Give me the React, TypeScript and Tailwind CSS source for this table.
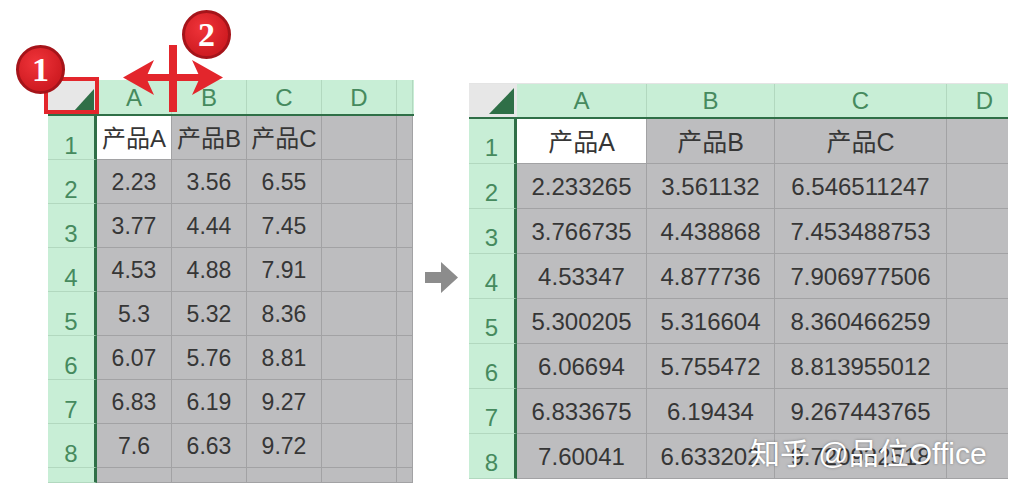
import React from 'react';

const FONT = "font-['Liberation_Sans','Noto_Sans_CJK_SC',sans-serif]";

const leftCols = ['w-[75px]', 'w-[75px]', 'w-[75px]', 'w-[75px]', 'w-[16px]'];
const rightCols = ['w-[130px]', 'w-[128px]', 'w-[172px]', 'w-[76px]'];
const letters = ['A', 'B', 'C', 'D', ''];

const leftData = [
  ['产品A', '产品B', '产品C'],
  ['2.23', '3.56', '6.55'],
  ['3.77', '4.44', '7.45'],
  ['4.53', '4.88', '7.91'],
  ['5.3', '5.32', '8.36'],
  ['6.07', '5.76', '8.81'],
  ['6.83', '6.19', '9.27'],
  ['7.6', '6.63', '9.72'],
];

const rightData = [
  ['产品A', '产品B', '产品C'],
  ['2.233265', '3.561132', '6.546511247'],
  ['3.766735', '4.438868', '7.453488753'],
  ['4.53347', '4.877736', '7.906977506'],
  ['5.300205', '5.316604', '8.360466259'],
  ['6.06694', '5.755472', '8.813955012'],
  ['6.833675', '6.19434', '9.267443765'],
  ['7.60041', '6.633202', '9.720932518'],
];

function LeftSheet() {
  return (
    <div className="ml-[48px] mt-[80px] w-[366px] h-[403px] overflow-hidden">
      {/* column headers */}
      <div className="flex h-[36px] bg-[#c8eed6] border-b-2 border-[#2f6f47]">
        <div className="w-[49px] h-full bg-[#e7e7e7] flex items-end justify-end p-[3px]">
          <div className="w-[20px] h-[22px] bg-[#2f6f47] [clip-path:polygon(100%_0,100%_100%,0_100%)]" />
        </div>
        {leftCols.map((w, i) => (
          <div
            key={i}
            className={`${w} h-full shrink-0 border-r border-[#b2d8bf] flex items-end justify-center pb-[1px] text-[24px] leading-none text-[#468a5e]`}
          >
            <span className="pb-[3px]">{letters[i]}</span>
          </div>
        ))}
      </div>
      {/* rows */}
      {[...leftData, null].map((row, r) => (
        <div key={r} className={`flex ${row ? 'h-[44px]' : 'h-[15px]'}`}>
          <div className="w-[49px] shrink-0 bg-[#c8eed6] border-r-[3px] border-[#2f6f47] border-b border-b-[#b2d8bf] flex items-end justify-center pb-[1px] text-[24px] leading-none text-[#468a5e]">
            {row ? r + 1 : ''}
          </div>
          {leftCols.map((w, c) => (
            <div
              key={c}
              className={`${w} shrink-0 border-r border-b border-[#a2a2a4] flex items-center justify-center pt-[2px] leading-none text-[#363636] ${
                r === 0 ? 'text-[24px]' : 'text-[23px]'
              } ${r === 0 && c === 0 ? 'bg-white' : 'bg-[#bdbdbf]'}`}
            >
              {row && c < 3 ? row[c] : ''}
            </div>
          ))}
        </div>
      ))}
    </div>
  );
}

function RightSheet() {
  return (
    <div className="ml-[11px] mt-[83px] w-[539px] h-[396px] overflow-hidden border-t border-[#e4e4e4]">
      <div className="flex h-[35px] bg-[#c8eed6] border-b-2 border-[#2f6f47]">
        <div className="w-[48px] h-full shrink-0 bg-[#e7e7e7] flex items-end justify-end p-[3px]">
          <div className="w-[25px] h-[26px] bg-[#2f6f47] [clip-path:polygon(100%_0,100%_100%,0_100%)]" />
        </div>
        {rightCols.map((w, i) => (
          <div
            key={i}
            className={`${w} h-full shrink-0 border-r border-[#b2d8bf] flex items-end justify-center text-[24px] leading-none text-[#468a5e]`}
          >
            <span className="pb-[4px]">{letters[i]}</span>
          </div>
        ))}
      </div>
      {rightData.map((row, r) => (
        <div key={r} className="flex h-[45px]">
          <div className="w-[48px] shrink-0 bg-[#c8eed6] border-r-[3px] border-[#2f6f47] border-b border-b-[#b2d8bf] flex items-end justify-center pb-[3px] text-[24px] leading-none text-[#468a5e]">
            {r + 1}
          </div>
          {rightCols.map((w, c) => (
            <div
              key={c}
              className={`${w} shrink-0 border-r border-b border-[#a2a2a4] flex items-center justify-center pt-[2px] leading-none text-[#363636] ${
                r === 0 ? 'text-[25px]' : 'text-[24px]'
              } ${r === 0 && c === 0 ? 'bg-white' : 'bg-[#bdbdbf]'}`}
            >
              {c < 3 ? row[c] : ''}
            </div>
          ))}
        </div>
      ))}
    </div>
  );
}

function Badge({ n, className }: { n: string; className: string }) {
  return (
    <div
      className={`absolute w-[49px] h-[49px] rounded-full bg-[radial-gradient(circle_at_40%_35%,#f0343a,#d01c22_70%)] border-[3px] border-[#a5141a] flex items-center justify-center text-white text-[34px] font-bold leading-none font-['Liberation_Serif',serif] ${className}`}
    >
      {n}
    </div>
  );
}

export default function App() {
  return (
    <div className={`relative w-[1016px] h-[500px] bg-white overflow-hidden ${FONT}`}>
      <div className="flex items-start">
        <LeftSheet />
        {/* gray arrow */}
        <svg className="ml-[11px] mt-[262px] shrink-0" width="33" height="31" viewBox="0 0 33 31">
          <path d="M0 10 H16 V0 L33 15.5 L16 31 V21 H0 Z" fill="#8c8c8c" />
        </svg>
        <RightSheet />
      </div>

      {/* annotation: red box around select-all corner */}
      <div className="absolute left-[44px] top-[77px] w-[55px] h-[37px] border-[4px] border-[#e3262c]" />

      {/* annotation: column resize arrow */}
      <svg className="absolute left-0 top-0" width="260" height="130" viewBox="0 0 260 130">
        <rect x="138" y="74" width="64" height="7" fill="#e3262c" />
        <path d="M123 77.5 L154 60 L146 77.5 L154 95 Z" fill="#e3262c" />
        <path d="M223 77.5 L192 60 L200 77.5 L192 95 Z" fill="#e3262c" />
        <rect x="169" y="45" width="8" height="67" fill="#e3262c" />
      </svg>

      <Badge n="1" className="left-[16px] top-[45px]" />
      <Badge n="2" className="left-[182px] top-[10px]" />

      {/* watermark */}
      <div className="absolute left-[750px] top-[439px] text-white text-[30px] leading-none whitespace-nowrap [text-shadow:0_0_3px_rgba(0,0,0,0.35)]">
        知乎 @品位Office
      </div>
    </div>
  );
}
